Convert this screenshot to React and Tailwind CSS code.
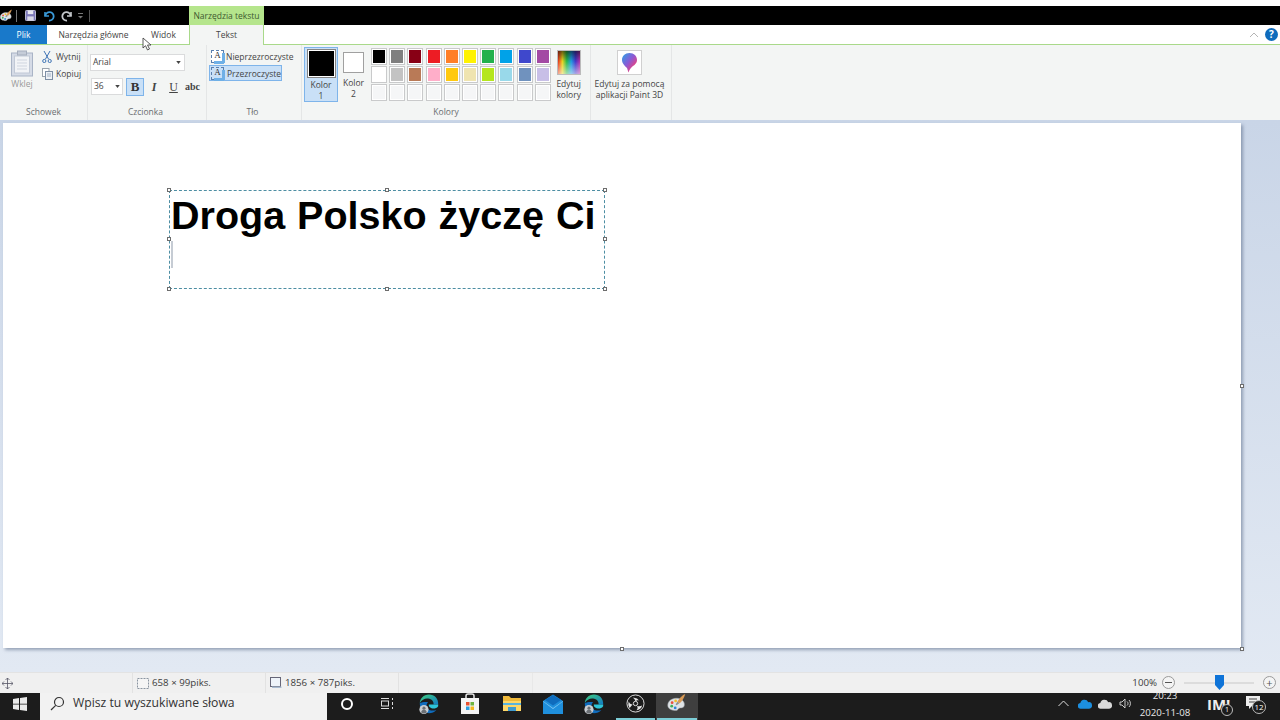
const topColors = ["#000000","#7f7f7f","#880015","#ed1c24","#ff7f27","#fff200","#22b14c","#00a2e8","#3f48cc","#a349a4"];
const midColors = ["#ffffff","#c3c3c3","#b97a57","#ffaec9","#ffc90e","#efe4b0","#b5e61d","#99d9ea","#7092be","#c8bfe7"];
const blank = Array(10).fill("#f5f6f7");

function Swatch({ color }) {
  return (
    <div className="w-4 h-[17px] border border-[#c9cacb] bg-white p-px">
      <div className="w-full h-full" style={{ background: color }} />
    </div>
  );
}

function Group({ label, width, labelClass = "", children }) {
  return (
    <div className={`flex flex-col h-[75px] border-r border-[#e4e6e6] shrink-0 ${width}`}>
      <div className="flex-1 min-h-0">{children}</div>
      <div className={`h-[15px] text-center text-[8.5px] leading-[13px] text-[#6a6d70] ${labelClass}`}>{label}</div>
    </div>
  );
}

function Handle({ className }) {
  return <div className={`absolute w-[4px] h-[4px] bg-white border border-[#6d6d6d] ${className}`} />;
}

function PaintIcon({ size = 16 }) {
  return (
    <svg width={size} height={size} viewBox="0 0 24 24">
      <path d="M2 14c0-5 5-8 10-8s9 3 9 7-3 4-5 4-2 3-5 3-9-1-9-6z" fill="#dfe3e6" stroke="#9aa0a6" strokeWidth=".6" />
      <circle cx="7" cy="11" r="1.6" fill="#e9503e" />
      <circle cx="11" cy="9" r="1.6" fill="#f3c02c" />
      <circle cx="6.5" cy="15" r="1.6" fill="#3fae5a" />
      <circle cx="10.5" cy="17" r="1.6" fill="#2f86d6" />
      <path d="M22 1c-3 1-7 5-9 9l2 2c3-2 6-7 7-11z" fill="#d99a55" />
      <path d="M13 10l2 2-3 2-1-1z" fill="#8a8f94" />
    </svg>
  );
}

function EdgeIcon() {
  return (
    <svg width="22" height="22" viewBox="0 0 24 24">
      <defs>
        <linearGradient id="eg1" x1="0" y1="0" x2="1" y2="1"><stop offset="0" stopColor="#3fd07f" /><stop offset="1" stopColor="#1279c4" /></linearGradient>
      </defs>
      <path d="M12 1.5C6 1.5 2 6 2 11c2-4 6-5.5 9-5 4 .5 6.5 3.5 6 6.5h5C22.5 6 18 1.5 12 1.5z" fill="url(#eg1)" />
      <path d="M2 11c-.5 6 4 11 10 11 3 0 6-1 8-3.500-3 1-7 1-9-1-2.500-2.500-2-5.500 0-7.500-3-.5-7 0-9 1z" fill="#0f6cbd" />
      <path d="M12 12c-1 3 2 5 5 5 2 0 3.500-.5 5-2.500v-2H12z" fill="#2ec4d8" />
      <circle cx="6.5" cy="18" r="5" fill="#c9cdd1" />
      <circle cx="6.5" cy="16.5" r="1.7" fill="#6b7075" />
      <path d="M3.3 21c.5-2 1.7-2.800 3.200-2.800s2.700.8 3.200 2.800a5 5 0 0 1-6.400 0z" fill="#6b7075" />
    </svg>
  );
}

function TaskIcon({ children, active }) {
  return (
    <div className={`relative w-[41.3px] h-full pb-[6px] flex items-center justify-center shrink-0 ${active ? "bg-[#3f3f3f]" : ""}`}>
      {children}
      {active !== undefined && <div className="absolute bottom-0 left-0 right-0 mx-px h-[2px] bg-[#7ccdd6]" />}
    </div>
  );
}

function TextBgIcon({ filled }) {
  return (
    <div className={`relative w-[13px] h-[13px] border border-dashed border-[#5a7fae] flex items-center justify-center font-['Liberation_Serif',serif] text-[9px] text-[#333] ${filled ? "" : "bg-white"}`}>
      A
      <div className="absolute -right-[2px] top-[2px] w-[3px] h-[10px] bg-[#6fb0e6]" />
      <div className="absolute -bottom-[2px] left-[2px] w-[10px] h-[3px] bg-[#6fb0e6]" />
    </div>
  );
}

export default function App() {
  return (
    <div className="w-[1280px] h-[720px] overflow-hidden flex flex-col bg-white font-['Open_Sans','Noto_Sans',sans-serif] text-[#3b3b3b]">
      <div className="h-[6px] bg-white shrink-0" />

      {/* Title bar */}
      <div className="h-[19px] bg-black flex items-center shrink-0">
        <div className="w-[14px] ml-[-1px] flex items-center"><PaintIcon size={14} /></div>
        <div className="w-px h-3 bg-[#777] ml-[3px]" />
        <svg className="ml-[8px]" width="11" height="11" viewBox="0 0 12 12">
          <rect x=".5" y=".5" width="11" height="11" rx="1" fill="#7c78b8" stroke="#c9c9e0" />
          <rect x="3" y=".5" width="6" height="4" fill="#e8e8f2" />
          <rect x="2.5" y="7" width="7" height="4.5" fill="#d9d9e8" />
        </svg>
        <svg className="ml-[7px]" width="12" height="12" viewBox="0 0 12 12" fill="none">
          <path d="M2 2v4h4" stroke="#3a9ad9" strokeWidth="1.6" />
          <path d="M2.3 6A4.2 4.2 0 1 1 6 10.5" stroke="#3a9ad9" strokeWidth="1.8" />
        </svg>
        <svg className="ml-[6px]" width="12" height="12" viewBox="0 0 12 12" fill="none">
          <path d="M10 2v4H6" stroke="#c4c7cb" strokeWidth="1.6" />
          <path d="M9.7 6A4.2 4.2 0 1 0 6 10.5" stroke="#c4c7cb" strokeWidth="1.8" />
        </svg>
        <svg className="ml-[5px]" width="6" height="6" viewBox="0 0 6 6" fill="#777"><rect y="0" width="5" height="1" /><path d="M0 3h5L2.5 5.500z" /></svg>
        <div className="w-px h-3 bg-[#555] ml-[5px]" />
        <div className="ml-[99px] w-[75px] h-[19px] pt-px bg-[#b5e58c] flex items-center justify-center text-[8.5px] text-[#3f5a30] whitespace-nowrap">Narzędzia tekstu</div>
      </div>

      {/* Tabs */}
      <div className="h-[20px] flex bg-white border-b border-[#a9d98a] shrink-0 text-[8.5px]">
        <div className="w-[47px] h-[19px] pt-px bg-[#1979ca] text-white flex items-center justify-center">Plik</div>
        <div className="w-[93px] pt-px flex items-center justify-center text-[#444] whitespace-nowrap">Narzędzia główne</div>
        <div className="w-[49px] pt-px flex items-center justify-center text-[#444] pr-[2px]">Widok</div>
        <div className="w-[75px] h-[20px] bg-[#f3f5f4] border-x border-[#a9d98a] flex items-center justify-center text-[#444] -mb-px z-10">Tekst</div>
        <div className="flex-1 flex items-center justify-end pr-[2px] gap-[6px]">
          <svg width="10" height="6" viewBox="0 0 10 6" fill="none"><path d="M1 5l4-4 4 4" stroke="#b5b5b5" /></svg>
          <div className="w-[13px] h-[13px] rounded-full bg-[#0f6cbd] text-white text-[10px] leading-[13px] font-bold text-center">?</div>
        </div>
      </div>

      {/* Ribbon */}
      <div className="h-[75px] bg-[#f3f5f4] flex shrink-0 text-[8.5px] text-[#444]">
        <Group label="Schowek" width="w-[88px]">
          <div className="flex pl-[10px] pt-[5px]">
            <div className="w-[24px] flex flex-col items-center">
              <svg width="24" height="27" viewBox="0 0 24 27">
                <rect x="1.5" y="3" width="21" height="23" fill="#d5dbe6" stroke="#a9b4c6" />
                <rect x="4.5" y="6" width="15" height="17" fill="#f2f4f7" stroke="#c1c9d6" />
                <rect x="7.5" y="1" width="9" height="4" fill="#c5ccd8" stroke="#a5aebd" />
                <path d="M7 10h10M7 13h10M7 16h10M7 19h10" stroke="#cfd5df" />
              </svg>
              <div className="text-[#9a9a9a] mt-[2px] leading-[10px]">Wklej</div>
            </div>
            <div className="ml-[8px] pt-px flex flex-col gap-[5px]">
              <div className="h-[12px] flex items-center gap-[4px]">
                <svg width="10" height="12" viewBox="0 0 10 12" fill="none" stroke="#3f74b5">
                  <path d="M2 0l4.5 8M8 0L3.5 8" />
                  <circle cx="2.3" cy="10" r="1.6" />
                  <circle cx="7.7" cy="10" r="1.6" />
                </svg>
                <span>Wytnij</span>
              </div>
              <div className="h-[12px] flex items-center gap-[3px]">
                <svg width="11" height="12" viewBox="0 0 11 12">
                  <rect x=".5" y=".5" width="6.5" height="8" fill="#fff" stroke="#9aa3ad" />
                  <rect x="3.5" y="3.5" width="7" height="8" fill="#eef1f5" stroke="#7e8fa5" />
                  <path d="M5 6h4M5 8h4" stroke="#9fb0c4" />
                </svg>
                <span>Kopiuj</span>
              </div>
            </div>
          </div>
        </Group>

        <Group label="Czcionka" width="w-[119px]" labelClass="pr-[3px]">
          <div className="pl-[2px] pt-[9px]">
            <div className="w-[95px] h-[17px] bg-white border border-[#dadbdc] flex items-center justify-between px-[2px]">
              <span>Arial</span>
              <svg width="5" height="3" viewBox="0 0 6 4" fill="#444" className="mr-[1px]"><path d="M0 0h6L3 4z" /></svg>
            </div>
            <div className="flex items-center mt-[7px] h-[17px]">
              <div className="w-[32px] h-[17px] ml-px bg-white border border-[#dadbdc] flex items-center justify-between px-[2px]">
                <span>36</span>
                <svg width="5" height="3" viewBox="0 0 6 4" fill="#444"><path d="M0 0h6L3 4z" /></svg>
              </div>
              <div className="ml-[3px] w-[18px] h-[18px] bg-[#c9e0f7] border border-[#7eb4ea] flex items-center justify-center font-['Liberation_Serif',serif] font-bold text-[13px] text-[#333]">B</div>
              <div className="w-[20px] text-center font-['Liberation_Serif',serif] italic font-bold text-[12px] text-[#444]">I</div>
              <div className="w-[19px] text-center font-['Liberation_Serif',serif] underline text-[12px] text-[#444]">U</div>
              <div className="w-[19px] text-center font-['Liberation_Serif',serif] font-bold text-[10px] text-[#444]">abc</div>
            </div>
          </div>
        </Group>

        <Group label="Tło" width="w-[95px]" labelClass="pr-[3px]">
          <div className="pl-[2px] pt-[3px]">
            <div className="h-[15px] flex items-center gap-[2px] pl-[2px] pt-[1px]">
              <TextBgIcon />
              <span className="whitespace-nowrap pt-[2px]">Nieprzezroczyste</span>
            </div>
            <div className="mt-[2px] w-[73px] h-[16px] bg-[#c9e0f7] border border-[#7eb4ea] flex items-center gap-[3px] pl-px">
              <TextBgIcon filled />
              <span className="whitespace-nowrap pt-[2px]">Przezroczyste</span>
            </div>
          </div>
        </Group>

        <Group label="Kolory" width="w-[289px]">
          <div className="flex pt-[2px] pl-[2px]">
            <div className="w-[34px] h-[55px] bg-[#c9e0f7] border border-[#7eb4ea] flex flex-col items-center pt-px">
              <div className="w-[29px] h-[29px] border border-[#848484] bg-white p-px"><div className="w-full h-full bg-black" /></div>
              <div className="text-center leading-[11px] mt-[1px]">Kolor<br />1</div>
            </div>
            <div className="w-[31px] flex flex-col items-center pt-[5px]">
              <div className="w-[21px] h-[21px] border border-[#a0a0a0] bg-white" />
              <div className="text-center leading-[11px] mt-[4px]">Kolor<br />2</div>
            </div>
            <div className="ml-[2px] grid grid-cols-[repeat(10,16px)] gap-x-[2.2px] gap-y-px pt-px h-fit">
              {topColors.map((c) => <Swatch key={c} color={c} />)}
              {midColors.map((c) => <Swatch key={c} color={c} />)}
              {blank.map((c, i) => <Swatch key={i} color={c} />)}
            </div>
            <div className="ml-[5px] w-[26px] flex flex-col items-center pt-[3px]">
              <div className="w-[24px] h-[25px] border border-[#bbbbbb] bg-[linear-gradient(90deg,#e8331f,#e9d21f,#27b84b,#1e9be0,#4438c9,#b331a8)] p-0">
                <div className="w-full h-full bg-[linear-gradient(180deg,rgba(0,0,0,.55),rgba(0,0,0,0)_45%,rgba(255,255,255,.55))]" />
              </div>
              <div className="text-center leading-[11px] mt-[3px] whitespace-nowrap">Edytuj<br />kolory</div>
            </div>
          </div>
        </Group>

        <Group label="" width="w-[81px]">
          <div className="flex flex-col items-center pt-[5px] pr-[3px]">
            <div className="w-[25px] h-[25px] bg-white border border-[#d0d0d0] flex items-center justify-center">
              <svg width="17" height="21" viewBox="0 0 17 21">
                <defs>
                  <linearGradient id="p3d" x1="0" y1="0" x2="1" y2="1">
                    <stop offset="0" stopColor="#27a5e6" />
                    <stop offset=".45" stopColor="#8a5bd6" />
                    <stop offset=".8" stopColor="#ee3f7a" />
                    <stop offset="1" stopColor="#f59a2c" />
                  </linearGradient>
                </defs>
                <path d="M8.5 1C4 1 1 4 1 8c0 3.5 3 6 5 8l1.5 4.5C8.5 17 11 14.5 13.500 13 15 11.500 16 10 16 8c0-4-3-7-7.500-7z" fill="url(#p3d)" />
              </svg>
            </div>
            <div className="text-center leading-[11px] mt-[3px] whitespace-nowrap">Edytuj za pomocą<br />aplikacji Paint 3D</div>
          </div>
        </Group>
      </div>

      {/* Canvas area */}
      <div className="flex-1 min-h-0 bg-[linear-gradient(180deg,#c9d5e7,#e2e9f3)] pl-[3px] pt-[3px] relative">
        <div className="w-[1238px] h-[525px] bg-white shadow-[2px_2px_3px_rgba(90,105,135,.55)] relative">
          <div className="absolute left-[166px] top-[67px] w-[436px] h-[99px] border border-dashed border-[#4d8ea3]">
            <div className="pl-[1px] pt-[2px] font-['Liberation_Sans',Arial,sans-serif] font-bold text-[39.5px] leading-[44px] text-black whitespace-nowrap [word-spacing:1px]">Droga Polsko życzę Ci</div>
            <div className="absolute left-px top-[50px] w-[2px] h-[27px] bg-[#c6ccd4]" />
            <Handle className="-left-[3px] -top-[3px]" />
            <Handle className="left-[215px] -top-[3px]" />
            <Handle className="-right-[3px] -top-[3px]" />
            <Handle className="-left-[3px] top-[46px]" />
            <Handle className="-right-[3px] top-[46px]" />
            <Handle className="-left-[3px] -bottom-[3px]" />
            <Handle className="left-[215px] -bottom-[3px]" />
            <Handle className="-right-[3px] -bottom-[3px]" />
          </div>
          <Handle className="left-[617px] -bottom-[3px]" />
          <Handle className="-right-[3px] -bottom-[3px]" />
          <Handle className="-right-[3px] top-[261px]" />
        </div>
        {/* cursor */}
        <svg className="absolute left-[142px] -top-[83px]" width="10" height="14" viewBox="0 0 10 14">
          <path d="M1 1v10l2.5-2.3L5.500 13l2-1-2-4h3.500z" fill="#fff" stroke="#333" strokeWidth=".8" />
        </svg>
      </div>

      {/* Status bar */}
      <div className="h-[21px] bg-[#f0f0f0] border-t border-[#e3e3e3] flex items-center shrink-0 text-[9.7px] text-[#3c3c3c]">
        <div className="w-[133px] h-full border-r border-[#e2e2e2] flex items-center pl-[2px]">
          <svg width="11" height="11" viewBox="0 0 11 11" fill="none" stroke="#556">
            <path d="M5.5 0v11M0 5.5h11M3.5 2l2-2 2 2M3.500 9l2 2 2-2M2 3.500l-2 2 2 2M9 3.500l2 2-2 2" strokeWidth=".8" />
          </svg>
        </div>
        <div className="w-[133px] h-full border-r border-[#e2e2e2] flex items-center pl-[3px] gap-[2px]">
          <svg width="14" height="13" viewBox="0 0 14 13"><rect x="1.5" y="1.5" width="11" height="10" fill="#f5f5f5" stroke="#8a94a0" strokeDasharray="2 1" /></svg>
          <span className="whitespace-nowrap">658 × 99piks.</span>
        </div>
        <div className="w-[133px] h-full border-r border-[#e2e2e2] flex items-center pl-[3px] gap-[3px]">
          <svg width="13" height="12" viewBox="0 0 13 12"><rect x="1.5" y=".5" width="10" height="9" fill="#eef3f9" stroke="#667" /><rect x="3" y="9.5" width="9.5" height="1.5" fill="#a9bbd0" /></svg>
          <span className="whitespace-nowrap">1856 × 787piks.</span>
        </div>
        <div className="w-[134px] h-full border-r border-[#e8e8e8]" />
        <div className="flex-1 flex items-center justify-end pr-[4px]">
          <span className="mr-[5px]">100%</span>
          <div className="w-[13px] h-[13px] rounded-full border border-[#9a9a9a] flex items-center justify-center bg-[#f4f4f4]"><div className="w-[7px] h-px bg-[#555]" /></div>
          <div className="relative w-[70px] h-[2px] bg-[#dcdcdc] mx-[9px]">
            <div className="absolute left-[31px] -top-[7px] w-[9px] h-[15px]">
              <svg width="9" height="15" viewBox="0 0 9 15"><path d="M0 0h9v10l-4.5 5L0 10z" fill="#0f74d8" /></svg>
            </div>
          </div>
          <div className="w-[13px] h-[13px] rounded-full border border-[#9a9a9a] flex items-center justify-center bg-[#f4f4f4] text-[11px] leading-none text-[#555]">+</div>
        </div>
      </div>

      {/* Taskbar */}
      <div className="h-[27px] bg-[#1c1c1c] flex items-center shrink-0 text-white">
        <div className="w-[40px] h-full pb-[6px] flex items-center justify-center">
          <svg width="14" height="14" viewBox="0 0 14 14" fill="#e9e9e9">
            <path d="M0 2l6-.9V6.700H0zM7 1l7-1v6.700H7zM0 7.500h6V13L0 12zM7 7.500h7V14l-7-1z" />
          </svg>
        </div>
        <div className="w-[287px] h-full pb-[6px] bg-[#f2f2f2] flex items-center pl-[10px] text-[12.2px] text-[#333] gap-[8px]">
          <svg width="15" height="15" viewBox="0 0 15 15" fill="none" stroke="#333" strokeWidth="1.2">
            <circle cx="9" cy="6" r="4.5" />
            <path d="M5.7 9.3L1 14" />
          </svg>
          <span className="whitespace-nowrap">Wpisz tu wyszukiwane słowa</span>
        </div>
        <div className="w-[39px] h-full pb-[6px] flex items-center justify-center">
          <div className="w-[12px] h-[12px] rounded-full border-2 border-white" />
        </div>
        <div className="w-[41px] mr-[1.5px] h-full pb-[6px] flex items-center justify-center">
          <svg width="14" height="13" viewBox="0 0 14 13" fill="none" stroke="#ddd">
            <path d="M1 1.5h8M1 11.5h8M12.5 1v2M12.5 5v3M12.5 10v2" />
            <rect x="1.5" y="4" width="7" height="5" />
          </svg>
        </div>
        <TaskIcon><EdgeIcon /></TaskIcon>
        <TaskIcon>
          <svg width="20" height="22" viewBox="0 0 20 22">
            <path d="M6 6V3a2 2 0 0 1 2-2h4a2 2 0 0 1 2 2v3" fill="none" stroke="#e6e6e6" strokeWidth="1.5" />
            <rect x="1" y="5" width="18" height="16" fill="#f4f4f4" />
            <rect x="6" y="9" width="3.5" height="3.5" fill="#e8502f" />
            <rect x="10.5" y="9" width="3.5" height="3.5" fill="#6eb43f" />
            <rect x="6" y="13.5" width="3.5" height="3.5" fill="#2b9fe0" />
            <rect x="10.5" y="13.5" width="3.5" height="3.5" fill="#f4b71c" />
          </svg>
        </TaskIcon>
        <TaskIcon>
          <svg width="20" height="18" viewBox="0 0 20 18">
            <path d="M1 1h6l2 2h10v13H1z" fill="#f0b93a" />
            <path d="M1 6h18v10H1z" fill="#ffd768" />
            <path d="M1 8h18v2H1z" fill="#59b4e0" />
            <path d="M6 12h8v4H6z" fill="#3f9bd0" />
          </svg>
        </TaskIcon>
        <TaskIcon>
          <svg width="22" height="20" viewBox="0 0 22 20">
            <path d="M1 7l10-6.5L21 7v13H1z" fill="#1f8fdc" />
            <path d="M1 7l10 7 10-7v.5L11 15 1 7.500z" fill="#7fc8f4" />
            <path d="M3 6l8-5 8 5-8 5.500z" fill="#0f6cbd" />
          </svg>
        </TaskIcon>
        <TaskIcon><EdgeIcon /></TaskIcon>
        <TaskIcon active={false}>
          <svg width="19" height="19" viewBox="0 0 20 20" fill="none">
            <circle cx="10" cy="10" r="9" stroke="#e6e6e6" />
            <circle cx="10" cy="10" r="2.3" stroke="#e6e6e6" />
            <path d="M7 4a7 7 0 0 1 7 3c-2-1-3-.5-4 1-.5-2-1.500-3.500-3-4zM17 12a7 7 0 0 1-6 5c1.500-1.500 1.500-3 .5-4.500 2 .5 4 .5 5.500-.5zM4 15a7 7 0 0 1-1-7c.5 2 2 3 4 3-1.500 1.500-2.500 2.500-3 4z" fill="#e6e6e6" />
          </svg>
        </TaskIcon>
        <TaskIcon active={true}><PaintIcon size={21} /></TaskIcon>
        <div className="flex-1" />
        <div className="h-full pb-[6px] flex items-center">
          <svg width="11" height="7" viewBox="0 0 11 7" fill="none" stroke="#ddd"><path d="M.5 6l5-5 5 5" /></svg>
          <svg className="ml-[9px]" width="14" height="10" viewBox="0 0 15 10"><path d="M3 10a3 3 0 0 1-.5-6A4.500 4.500 0 0 1 11 3a3.500 3.500 0 0 1 1 7z" fill="#1c8fe0" /></svg>
          <svg className="ml-[6px]" width="14" height="10" viewBox="0 0 15 10"><path d="M3 10a3 3 0 0 1-.5-6A4.500 4.500 0 0 1 11 3a3.500 3.500 0 0 1 1 7z" fill="#d9d9d9" /></svg>
          <svg className="ml-[7px]" width="13" height="11" viewBox="0 0 13 11" fill="none" stroke="#ddd" strokeWidth=".9"><path d="M1 4h2l3-3v9L3 7H1zM8 3.500a2.500 2.500 0 0 1 0 4M10 2a5 5 0 0 1 0 7" /></svg>
        </div>
        <div className="ml-[5px] w-[56px] text-center text-[9.7px] leading-[14px] text-[#e8e8e8] whitespace-nowrap h-full overflow-hidden">
          <div className="-mt-[4px]">20:23</div>
          <div className="mt-[3px]">2020-11-08</div>
        </div>
        <div className="ml-[14px] h-full pb-[6px] flex items-center">
          <div className="relative w-[22px] h-[16px]">
            <div className="text-[15px] font-bold leading-[16px] text-[#eee] whitespace-nowrap">IM!</div>
            <div className="absolute -right-[4px] -bottom-[4px] w-[12px] h-[12px] rounded-full bg-[#1c1c1c] border border-[#bbb] text-[7px] leading-[10px] text-center">1</div>
          </div>
        </div>
        <div className="ml-[17px] mr-[18px] h-full pb-[6px] flex items-center">
          <div className="relative w-[16px] h-[15px]">
            <svg width="14" height="13" viewBox="0 0 14 13"><path d="M0 0h14v10H6l-3 3v-3H0z" fill="#eee" /><path d="M3 3h8M3 6h8" stroke="#444" /></svg>
            <div className="absolute -right-[4px] -bottom-[3px] w-[14px] h-[14px] rounded-full bg-[#1c1c1c] border border-[#bbb] text-[8px] leading-[12px] text-center">12</div>
          </div>
        </div>
      </div>
    </div>
  );
}
